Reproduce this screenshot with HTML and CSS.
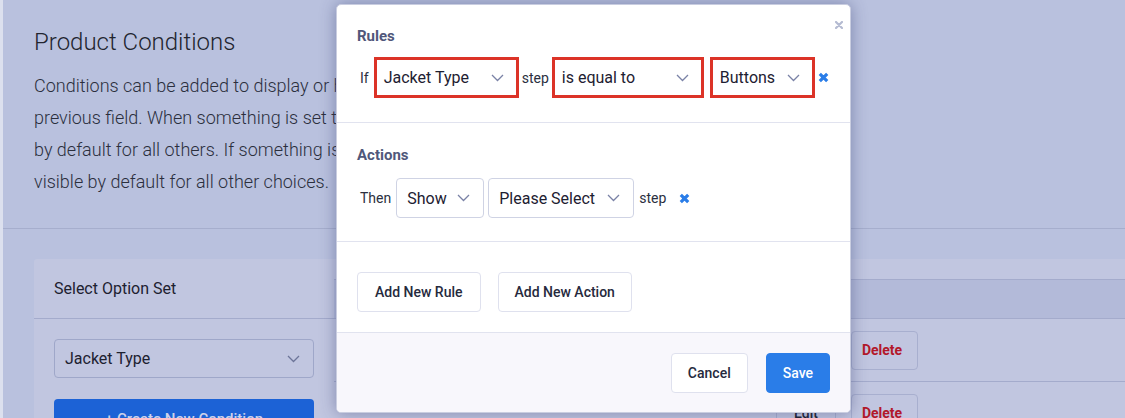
FILE: index.html
```html
<!DOCTYPE html>
<html lang="en">
<head>
<meta charset="utf-8">
<title>Product Conditions</title>
<link rel="stylesheet" href="styles.css">
</head>
<body>
<div class="app">
  <div class="edge"></div>
  <div class="main">
    <section class="intro">
      <h1>Product Conditions</h1>
      <p>Conditions can be added to display or hide option sets and choices based on a<br>previous field. When something is set to be shown, it will be hidden<br>by default for all others. If something is set to be hidden, it will be<br>visible by default for all other choices.</p>
    </section>
    <section class="content">
      <div class="card">
        <div class="side">
          <div class="side-head">Select Option Set</div>
          <div class="side-body">
            <div class="bg-select"><span>Jacket Type</span><svg class="chev" width="13" height="8" viewBox="0 0 13 8"><polyline points="1,1 6.5,6.5 12,1"/></svg></div>
            <div class="create">+ Create New Condition</div>
          </div>
        </div>
        <div class="table-col">
          <div class="thead"></div>
          <div class="trow">
            <div class="tname"></div>
            <div class="tactions"><div class="tbtn">Edit</div><div class="tbtn del">Delete</div></div>
          </div>
          <div class="trow">
            <div class="tname"></div>
            <div class="tactions"><div class="tbtn">Edit</div><div class="tbtn del">Delete</div></div>
          </div>
        </div>
      </div>
    </section>
  </div>
</div>

<div class="modal">
  <svg class="close" width="8" height="8" viewBox="0 0 8 8"><path d="M1 1L7 7M7 1L1 7"/></svg>
  <section class="msec rules">
    <div class="mtitle">Rules</div>
    <div class="mrow">
      <span class="lbl lbl-if">If</span>
      <div class="sel hl w1"><span>Jacket Type</span><svg class="chev" width="13" height="8" viewBox="0 0 13 8"><polyline points="1,1 6.5,6.5 12,1"/></svg></div>
      <span class="lbl lbl-step">step</span>
      <div class="sel hl w2"><span>is equal to</span><svg class="chev" width="13" height="8" viewBox="0 0 13 8"><polyline points="1,1 6.5,6.5 12,1"/></svg></div>
      <div class="sel hl w3"><span>Buttons</span><svg class="chev" width="13" height="8" viewBox="0 0 13 8"><polyline points="1,1 6.5,6.5 12,1"/></svg></div>
      <svg class="rm rm1" width="11" height="11" viewBox="0 0 11 11"><path d="M1.8 1.8L9.2 9.2M9.2 1.8L1.8 9.2"/></svg>
    </div>
  </section>
  <section class="msec actions">
    <div class="mtitle">Actions</div>
    <div class="mrow">
      <span class="lbl lbl-then">Then</span>
      <div class="sel w4"><span>Show</span><svg class="chev" width="13" height="8" viewBox="0 0 13 8"><polyline points="1,1 6.5,6.5 12,1"/></svg></div>
      <div class="sel w5"><span>Please Select</span><svg class="chev" width="13" height="8" viewBox="0 0 13 8"><polyline points="1,1 6.5,6.5 12,1"/></svg></div>
      <span class="lbl lbl-step2">step</span>
      <svg class="rm rm2" width="11" height="11" viewBox="0 0 11 11"><path d="M1.8 1.8L9.2 9.2M9.2 1.8L1.8 9.2"/></svg>
    </div>
  </section>
  <section class="msec adds">
    <div class="btn">Add New Rule</div>
    <div class="btn narrow">Add New Action</div>
  </section>
  <footer class="mfoot">
    <div class="btn narrow">Cancel</div>
    <div class="btn narrow primary">Save</div>
  </footer>
</div>
</body>
</html>
```

FILE: styles.css
```css
html, body {
  margin: 0;
  padding: 0;
}
body {
  width: 1125px;
  height: 418px;
  overflow: hidden;
  position: relative;
  background: #b9c1de;
  font-family: Roboto, "Liberation Sans", Arial, sans-serif;
}

/* ---------- dimmed background page ---------- */
.app {
  display: flex;
  height: 418px;
}
.edge {
  flex: none;
  width: 3px;
  background: #dce0ee;
}
.main {
  flex: 1;
  min-width: 0;
}
.intro {
  height: 229px;
  box-sizing: border-box;
  border-bottom: 1px solid #a6aecd;
  padding: 28px 0 0 31px;
}
.intro h1 {
  margin: 0;
  font-size: 24px;
  line-height: 28px;
  font-weight: 300;
  color: #22252f;
}
.intro p {
  margin: 14px 0 0;
  font-size: 18px;
  line-height: 32px;
  font-weight: 300;
  color: #2b2f3d;
  white-space: nowrap;
}
.content {
  padding: 30px 0 0 31px;
}
.card {
  display: flex;
  background: #c1c6e0;
  border-top-left-radius: 3px;
}
.side {
  flex: none;
  width: 300px;
}
.side-head {
  height: 60px;
  box-sizing: border-box;
  border-bottom: 1px solid #a4abcc;
  padding: 0 20px;
  display: flex;
  align-items: center;
  font-size: 16px;
  color: #1d2130;
}
.side-body {
  padding: 20px;
}
.bg-select {
  height: 39px;
  box-sizing: border-box;
  border: 1px solid #9fa7c9;
  border-radius: 4px;
  display: flex;
  align-items: center;
  justify-content: space-between;
  padding: 0 13px 0 10px;
  font-size: 16px;
  color: #1d2130;
}
.bg-select .chev polyline {
  stroke: #6d7599;
}
.create {
  margin-top: 21px;
  height: 40px;
  border-radius: 4px;
  background: #1c62d6;
  color: #ccd2ea;
  font-size: 15px;
  font-weight: 500;
  display: flex;
  align-items: center;
  justify-content: center;
}
.table-col {
  flex: 1;
  min-width: 0;
  padding-top: 20px;
}
.thead {
  height: 40px;
  box-sizing: border-box;
  border-top: 1px solid #a4abcc;
  border-bottom: 1px solid #a4abcc;
  background: #b3bad9;
}
.trow {
  display: flex;
  align-items: center;
  height: 63px;
  box-sizing: border-box;
  border-bottom: 1px solid #a4abcc;
}
.tname {
  flex: none;
  width: 442px;
}
.tactions {
  display: flex;
  gap: 15px;
}
.tbtn {
  height: 39px;
  box-sizing: border-box;
  border: 1px solid #a8afcf;
  border-radius: 4px;
  padding: 0 17px;
  display: flex;
  align-items: center;
  font-size: 14px;
  font-weight: 500;
  color: #1d2130;
}
.tbtn.del {
  padding: 0 15px 0 10px;
  font-weight: 700;
  color: #b3182a;
}

/* ---------- modal ---------- */
.modal {
  position: absolute;
  left: 336px;
  top: 4px;
  width: 515px;
  height: 409px;
  box-sizing: border-box;
  display: flex;
  flex-direction: column;
  background: #fff;
  border: 1px solid #c9cde0;
  border-radius: 5px;
  box-shadow: 0 0 16px rgba(50, 60, 110, 0.45);
  overflow: hidden;
}
.close {
  position: absolute;
  top: 16px;
  right: 7px;
}
.close path {
  stroke: #b5bbd2;
  stroke-width: 2.2;
  stroke-linecap: round;
}
.msec {
  border-bottom: 1px solid #e1e3ef;
  padding-left: 20px;
  padding-right: 20px;
}
.rules {
  padding-top: 21px;
  padding-bottom: 24px;
}
.actions {
  padding-top: 22px;
  padding-bottom: 23px;
}
.mtitle {
  font-size: 15px;
  line-height: 20px;
  font-weight: 700;
  color: #50577a;
}
.mrow {
  display: flex;
  align-items: center;
}
.rules .mrow {
  margin-top: 11px;
}
.actions .mrow {
  margin-top: 13px;
}
.lbl {
  font-size: 14px;
  color: #2b2f40;
}
.lbl-if {
  margin: 0 5px 0 3px;
}
.lbl-step {
  margin: 0 3px;
}
.lbl-then {
  margin: 0 5px 0 3px;
}
.lbl-step2 {
  margin: 0 13px 0 5px;
}
.sel {
  height: 40px;
  box-sizing: border-box;
  border: 1px solid #cfd3e4;
  border-radius: 4px;
  background: #fff;
  display: flex;
  align-items: center;
  justify-content: space-between;
  padding: 0 13px 0 10px;
  font-size: 16px;
  color: #1d2031;
}
.sel.hl {
  height: 41px;
  border: 3px solid #dc3327;
  border-radius: 0;
  padding: 0 12px 0 7px;
}
.chev polyline {
  fill: none;
  stroke: #7a82a6;
  stroke-width: 1.3;
}
.w1 { width: 145px; }
.w2 { width: 152px; }
.w3 { width: 105px; margin-left: 6px; }
.w4 { width: 88px; }
.w5 { width: 146px; margin-left: 4px; }
.rm path {
  stroke: #2a7de8;
  stroke-width: 3.2;
}
.rm1 {
  margin-left: 3px;
}
.adds {
  display: flex;
  gap: 17px;
  padding-top: 30px;
  padding-bottom: 20px;
}
.btn {
  height: 40px;
  box-sizing: border-box;
  border: 1px solid #dfe1ee;
  border-radius: 4px;
  background: #fff;
  padding: 0 17px;
  display: flex;
  align-items: center;
  font-size: 14px;
  font-weight: 500;
  color: #262a3d;
}
.btn.narrow {
  padding: 0 16px;
}
.btn.primary {
  background: #2a7de8;
  border-color: #2a7de8;
  color: #fff;
}
.mfoot {
  flex: 1;
  display: flex;
  justify-content: flex-end;
  align-items: flex-start;
  gap: 18px;
  padding: 20px 20px 0;
  background: #f8f7fc;
}
```
